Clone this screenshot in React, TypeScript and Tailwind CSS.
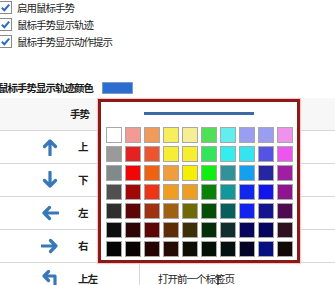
import React from 'react'

const palette: string[][] = [
  ['#ffffff', '#f29a94', '#f09a5c', '#f6ee5c', '#f6ee94', '#4fe056', '#62eeee', '#9a9ef0', '#9a9ef0', '#ee92ee'],
  ['#9a9a9a', '#e42222', '#ee5430', '#f6ee34', '#f6ee30', '#34e45a', '#34eeee', '#34e4f0', '#5454e4', '#ee54ee'],
  ['#808a8a', '#f00606', '#ee6212', '#ee9e3e', '#f6ee06', '#12ee12', '#32929a', '#14a0ee', '#2626a0', '#a01ea0'],
  ['#505050', '#a00808', '#ee3414', '#ee9e22', '#ee9e22', '#0a820a', '#129898', '#1226ee', '#1414ee', '#901490'],
  ['#2e2e2e', '#5e0606', '#9e3212', '#9e6212', '#6e6a06', '#064e06', '#065e5e', '#1224ee', '#14148e', '#500a50'],
  ['#0e0e0e', '#2e0404', '#5e0606', '#5e2c06', '#3e3006', '#062e06', '#102e2e', '#06065e', '#06065e', '#2e1020'],
  ['#040404', '#080202', '#260404', '#260a04', '#0e0e04', '#041004', '#041010', '#040424', '#061080', '#120808'],
]

const font = { fontFamily: '"Noto Sans CJK SC", "Noto Sans", sans-serif' }

function Check({ label }: { label: string }) {
  return (
    <div className="flex h-[17px] items-center">
      <div className="ml-[-1px] flex h-[13px] w-[13px] items-center justify-center border border-[#8a8a8a] bg-white">
        <svg viewBox="0 0 12 12" className="h-[11px] w-[11px]">
          <path d="M2 6.2 L4.8 9 L10 2.8" fill="none" stroke="#2a6cc2" strokeWidth="2.2" />
        </svg>
      </div>
      <span className="ml-[5px] text-[10.5px] tracking-[-1px] text-[#1e1e1e]">{label}</span>
    </div>
  )
}

function Arrow({ dir }: { dir: 'up' | 'down' | 'left' | 'right' | 'upleft' }) {
  const p = {
    up: 'M9 17 V3 M3.5 8.5 L9 3 L14.5 8.5',
    down: 'M9 1 V15 M3.5 9.5 L9 15 L14.5 9.5',
    left: 'M17 9 H3 M8.5 3.5 L3 9 L8.5 14.5',
    right: 'M1 9 H15 M9.5 3.5 L15 9 L9.5 14.5',
    upleft: 'M14 18 V6 H3 M7.5 1.5 L3 6 L7.5 10.5',
  }[dir]
  return (
    <svg viewBox="0 0 18 18" className="h-[18px] w-[18px]">
      <path d={p} fill="none" stroke="#3878b6" strokeWidth="3.2" strokeLinecap="round" strokeLinejoin="round" />
    </svg>
  )
}

function Row({ dir, label, action }: { dir: 'up' | 'down' | 'left' | 'right' | 'upleft'; label: string; action?: string }) {
  return (
    <div className="flex h-[33px] items-center border-b border-[#d8d8d8]">
      <div className="flex h-full w-[140px] items-center border-r border-[#d8d8d8]">
        <div className="ml-[41px]">
          <Arrow dir={dir} />
        </div>
        <span className="ml-[19px] text-[10.5px] font-bold tracking-[-1px] text-[#1e1e1e]">{label}</span>
      </div>
      {action && <span className="ml-[18px] text-[10.5px] tracking-[-1px] text-[#1e1e1e]">{action}</span>}
    </div>
  )
}

export default function App() {
  return (
    <div className="relative h-[285px] w-[335px] overflow-hidden bg-white" style={font}>
      <div className="mt-[-1px]">
        <Check label="启用鼠标手势" />
        <Check label="鼠标手势显示轨迹" />
        <Check label="鼠标手势显示动作提示" />
      </div>

      <div className="mt-[31px] flex h-[14px] items-center">
        <span className="ml-[-2px] text-[10.5px] font-semibold tracking-[-1px] text-[#1a1a1a]">鼠标手势显示轨迹颜色</span>
        <div className="ml-[9px] h-[12px] w-[31px] border border-[#7d9bc8] bg-[#2c6ed0]" />
      </div>

      <div className="mt-[3px]">
        <div className="flex h-[33px] items-center border-b border-[#d8d8d8] bg-[#f7f7f7]">
          <span className="ml-[70px] text-[10.5px] font-bold tracking-[-1px] text-[#1e1e1e]">手势</span>
        </div>
        <Row dir="up" label="上" />
        <Row dir="down" label="下" />
        <Row dir="left" label="左" />
        <Row dir="right" label="右" />
        <Row dir="upleft" label="上左" action="打开前一个标签页" />
      </div>

      <div className="absolute left-[98px] top-[99px] flex h-[164px] w-[202px] flex-col items-center border-[3px] border-[#8c1818] bg-white shadow-[0_0_1px_1px_#f0c8c8]">
        <div className="mt-[10px] h-[3px] w-[110px] bg-[#3b69a6]" />
        <div className="mt-[12px] grid grid-cols-10 gap-[3px]">
          {palette.flat().map((c, i) => (
            <div key={i} className="h-[16px] w-[16px] border border-[#a8a8a8]" style={{ backgroundColor: c }} />
          ))}
        </div>
      </div>

      <svg viewBox="0 0 8 12" className="absolute left-[214px] top-[276px] h-[12px] w-[8px]">
        <path d="M1 1 H7 M4 1 V11 M1 11 H7" fill="none" stroke="#111" strokeWidth="1.2" />
      </svg>
    </div>
  )
}
